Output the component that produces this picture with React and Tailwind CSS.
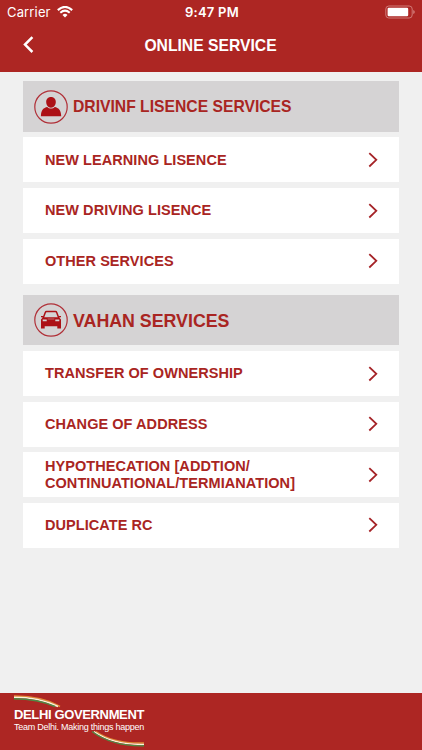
import React from 'react';

const sections = [
  {
    title: 'DRIVINF LISENCE SERVICES',
    titleClass: 'text-[15.7px] pt-px',
    icon: 'person',
    items: ['NEW LEARNING LISENCE', 'NEW DRIVING LISENCE', 'OTHER SERVICES']
  },
  {
    title: 'VAHAN SERVICES',
    titleClass: 'text-[17.8px] pt-px',
    icon: 'car',
    items: [
      'TRANSFER OF OWNERSHIP',
      'CHANGE OF ADDRESS',
      'HYPOTHECATION [ADDTION/ CONTINUATIONAL/TERMIANATION]',
      'DUPLICATE RC'
    ]
  }
];

function PersonIcon() {
  return (
    <svg viewBox="0 0 34 34" className="w-[34px] h-[34px] shrink-0">
      <circle cx="17" cy="17" r="16.2" fill="none" stroke="#b03038" strokeWidth="1.2" />
      <path d="M17 6.9c3 0 4.9 2.1 4.8 5.1-.1 3.2-2 5.7-4.8 5.7s-4.7-2.5-4.8-5.7c-.1-3 1.8-5.1 4.8-5.1z" fill="#ac1116" />
      <path d="M13.3 16.9c1 1.1 2.3 1.5 3.7 1.5s2.700-.4 3.700-1.500c3.700.8 6.400 2.800 6.500 9.300H6.900c.1-6.500 2.700-8.500 6.400-9.300z" fill="#ac1116" />
    </svg>
  );
}

function CarIcon() {
  return (
    <svg viewBox="0 0 34 34" className="w-[34px] h-[34px] shrink-0">
      <circle cx="17" cy="17" r="16.2" fill="none" stroke="#b03038" strokeWidth="1.2" />
      <path
        d="M9.200 15l2.100-5.600q.3-.8 1.200-.8h9q.9 0 1.200.8l2.100 5.600"
        fill="none"
        stroke="#ac1116"
        strokeWidth="1.500"
      />
      <path d="M7 12.900h2.200v1.300H7zM27 12.900h-2.200v1.300H27z" fill="#ac1116" />
      <path
        fillRule="evenodd"
        d="M8.900 14.200h16.200l1.900 2.300v9h-3.700v-2.200H10.700v2.200H7v-9zM8.700 16.500v1.700h4v-1.700zM25.300 16.500v1.700h-4v-1.700z"
        fill="#ac1116"
      />
      <path d="M13.600 16h6.800" stroke="#c98d90" strokeWidth=".7" />
    </svg>
  );
}

function StatusBar() {
  return (
    <div className="h-6 grid grid-cols-3 items-center pl-[7px] pr-[7px] font-['Inter',sans-serif] text-[13px] leading-6">
      <div className="flex items-center gap-[6px]">
        <span className="tracking-[0.15px]">Carrier</span>
        <svg viewBox="0 0 16 12" className="w-4 h-3" fill="none" stroke="#fff">
          <path d="M.8 4.100Q8-2.300 15.200 4.100" strokeWidth="2.100" />
          <path d="M3.300 6.700Q8 2.500 12.700 6.700" strokeWidth="2" />
          <path d="M5.500 8.900Q8 6.800 10.500 8.900L8 11.500z" fill="#fff" stroke="none" />
        </svg>
      </div>
      <span className="justify-self-center pl-[2px] font-semibold tracking-[0.25px] whitespace-nowrap">9:47 PM</span>
      <svg viewBox="0 0 30 14" className="w-[30px] h-[14px] justify-self-end">
        <rect x=".8" y="1" width="26.400" height="12" rx="3" fill="none" stroke="#d07a77" strokeWidth="1" />
        <rect x="2.600" y="2.700" width="20.600" height="8.600" rx="1.200" fill="#fff" />
        <path d="M28.300 5v4q1.400-.6 1.400-2t-1.400-2z" fill="#d98a87" />
      </svg>
    </div>
  );
}

function Header() {
  return (
    <header className="h-[72px] shrink-0 bg-[#ad2623] text-white">
      <StatusBar />
      <div className="h-[42px] grid grid-cols-[60px_1fr_60px] items-center">
        <button type="button" className="pl-[23px]" aria-label="Back">
          <svg viewBox="0 0 11 18" className="w-[11px] h-[18px]" fill="none" stroke="#fff" strokeWidth="2.500">
            <path d="M9.400 1.100L2 8.600l7.400 7.400" />
          </svg>
        </button>
        <h1 className="text-center text-[15.7px] leading-5 font-bold pt-px pr-px">ONLINE SERVICE</h1>
      </div>
    </header>
  );
}

function ServiceRow({ label }) {
  return (
    <button
      type="button"
      className="w-full h-[45px] bg-white flex items-center justify-between pl-[22px] pr-[21px] text-left"
    >
      <span className="w-[270px] pt-[0.700px] text-[14.500px] leading-[17px] font-bold tracking-[0.060px]">{label}</span>
      <svg viewBox="0 0 10 16" className="w-[10px] h-4" fill="none" stroke="#a52327" strokeWidth="1.800">
        <path d="M1.300 1.100L8.300 7.800l-7 6.700" />
      </svg>
    </button>
  );
}

function Section({ section }) {
  return (
    <section className="flex flex-col gap-[5.600px] text-[#a92522]">
      <div className="h-[50.500px] bg-[#d5d3d4] flex items-center gap-[5px] pl-[11px]">
        {section.icon === 'person' ? <PersonIcon /> : <CarIcon />}
        <h2 className={`font-bold leading-6 whitespace-nowrap ${section.titleClass}`}>{section.title}</h2>
      </div>
      {section.items.map((item) => (
        <ServiceRow key={item} label={item} />
      ))}
    </section>
  );
}

function Footer() {
  return (
    <footer className="relative h-[57px] shrink-0 bg-[#ad2623] text-white pl-[14px] pt-[15px]">
      <svg viewBox="0 0 48 14" className="absolute left-[14px] top-[2px] w-12 h-[14px]" fill="none">
        <path d="M0 1Q28 .8 46 11.500" stroke="#e08a35" strokeWidth="1.500" />
        <path d="M0 2.300Q25 2.300 44 11.500" stroke="#fbf3dc" strokeWidth="1.400" />
        <path d="M0 3.700Q24 3.700 41 11.500" stroke="#4d8b45" strokeWidth="1.400" />
      </svg>
      <div className="text-[13px] leading-[14px] font-bold tracking-[-0.360px] whitespace-nowrap">DELHI GOVERNMENT</div>
      <div className="text-[9px] leading-[10px] tracking-[-0.250px] whitespace-nowrap">
        Team Delhi. Making things happen
      </div>
      <svg viewBox="0 0 52 18" className="absolute left-[92px] top-[37px] w-[52px] h-[18px]" fill="none">
        <path d="M4 1.500Q22 14 52 13" stroke="#e08a35" strokeWidth="1.500" />
        <path d="M2 1.500Q21 15 52 14.400" stroke="#fbf3dc" strokeWidth="1.400" />
        <path d="M0 1.500Q20 16.500 52 15.800" stroke="#4d8b45" strokeWidth="1.400" />
      </svg>
    </footer>
  );
}

function App() {
  return (
    <div className="h-screen flex flex-col overflow-hidden bg-[#f0f0f0] font-['Liberation_Sans',Arial,sans-serif]">
      <Header />
      <main className="flex-1 flex flex-col gap-[11.300px] pl-[23px] pr-[23px] pt-[9.400px]">
        {sections.map((section) => (
          <Section key={section.title} section={section} />
        ))}
      </main>
      <Footer />
    </div>
  );
}

export default App;
